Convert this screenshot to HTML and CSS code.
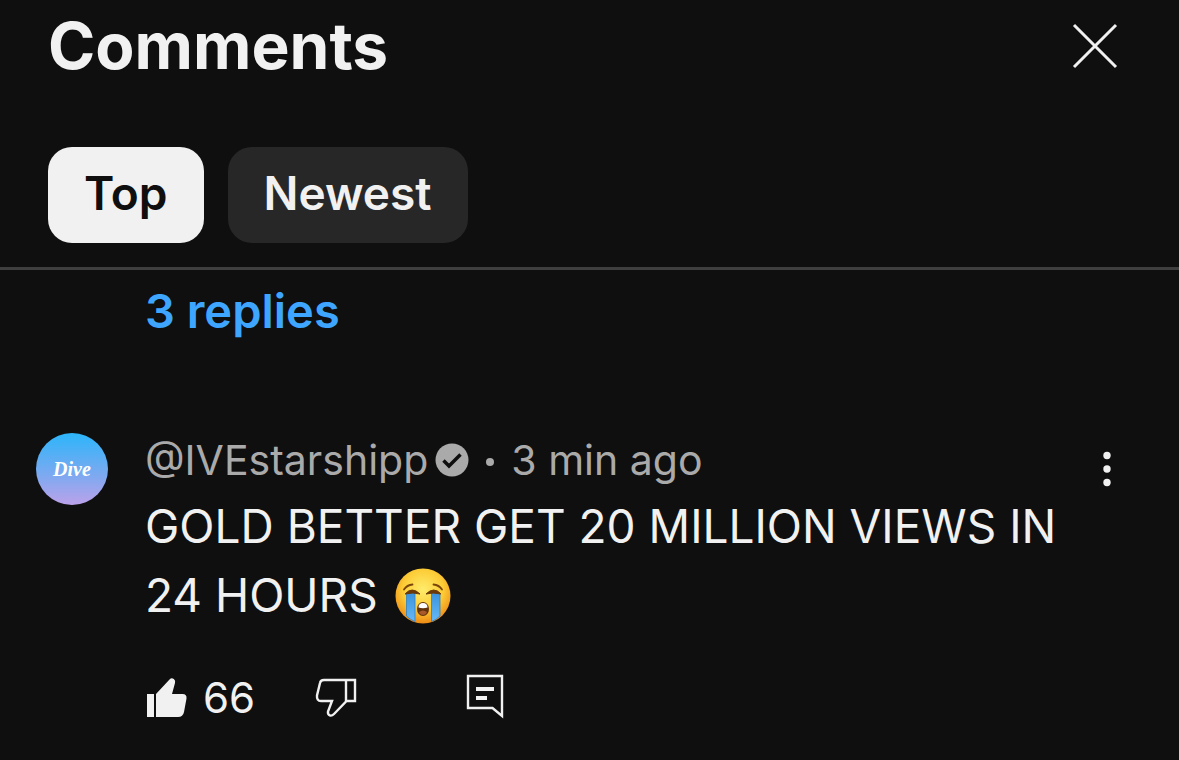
FILE: index.html
```html
<!DOCTYPE html>
<html lang="en">
  <head>
    <meta charset="utf-8" />
    <meta name="viewport" content="width=device-width, initial-scale=1" />
    <title>Comments</title>
    <link rel="stylesheet" href="styles.css">
  </head>

  <body>
    <div class="panel">
      <header class="header">
        <div class="title_row">
          <h1>Comments</h1>
          <button type="button" class="icon_btn" aria-label="Close">
            <svg width="48" height="48" viewBox="0 0 48 48">
              <path d="M3 3l42 42M45 3L3 45" fill="none" stroke="#f1f1f1" stroke-width="3" />
            </svg>
          </button>
        </div>
        <div class="chips">
          <button type="button" class="chip active">Top</button>
          <button type="button" class="chip">Newest</button>
        </div>
      </header>

      <main class="list">
        <a href="#" class="replies">3 replies</a>

        <article class="comment">
          <div class="avatar"><span>Dive</span></div>

          <div class="content">
            <div class="meta">
              <span>@IVEstarshipp</span>
              <svg class="verified" width="34" height="34" viewBox="0 0 34 34">
                <circle cx="17" cy="17" r="16.5" fill="#aaa" />
                <path d="M8.5 17.5l5.5 5.5L25.500 11.500" fill="none" stroke="#0f0f0f" stroke-width="3.5" />
              </svg>
              <span class="dot"></span>
              <span>3 min ago</span>
            </div>

            <p class="text">
              GOLD BETTER GET 20 MILLION VIEWS IN 24 HOURS
              <svg class="emoji" role="img" aria-label="Loudly crying face" width="56" height="56" viewBox="0 0 56 56">
                <defs>
                  <radialGradient id="face" cx="50%" cy="38%" r="62%">
                    <stop offset="0" stop-color="#ffec6b" />
                    <stop offset="0.6" stop-color="#fccb35" />
                    <stop offset="1" stop-color="#ee8b16" />
                  </radialGradient>
                  <linearGradient id="tear" x1="0" y1="0" x2="0" y2="1">
                    <stop offset="0" stop-color="#3b93dc" />
                    <stop offset="1" stop-color="#66b9f5" />
                  </linearGradient>
                </defs>
                <circle cx="28" cy="28" r="27.5" fill="url(#face)" />
                <path d="M11.500 25H20v28.500Q15 51.500 11.500 48zM36.500 25H45v23Q41 52 36.500 53.500z" fill="url(#tear)" stroke="#2f7fc4" stroke-width="0.8" />
                <path d="M10 26q7-8 15 0q-7-2-15 0zM46 26q-7-8-15 0q7-2 15 0z" fill="#6b3a08" stroke="#6b3a08" stroke-width="1" />
                <path d="M9 21.500q3-4.500 8.500-5M47 21.500q-3-4.500-8.500-5" fill="none" stroke="#7a4508" stroke-width="1.8" stroke-linecap="round" />
                <ellipse cx="28" cy="41" rx="6" ry="7" fill="#62320c" />
                <path d="M23.500 39.500q0-4.500 4.500-4.500t4.500 4.500q-4.500 1.500-9 0z" fill="#fff" />
                <path d="M24 44q4-3 8 0q-1 3-4 3t-4-3z" fill="#a85a2a" />
              </svg>
            </p>

            <div class="actions">
              <button type="button" class="like" aria-label="Like, 66">
                <svg width="42" height="48" viewBox="0 0 42 48">
                  <path d="M2 20h7v23H2zM11 20L24.500 5.500Q26.500 3.500 28.800 5Q30.800 6.500 30 9L27 20h10.500q4.500 0 4 4.500l-2.500 13.500q-1 5-6 5H11z" fill="#f1f1f1" />
                </svg>
                <span>66</span>
              </button>
              <button type="button" class="dislike" aria-label="Dislike">
                <svg width="42" height="48" viewBox="0 0 42 48">
                  <path d="M31 6H9Q5.500 6 5 9L2 21.500Q1.500 27 6 27H17L13 37.500Q12.500 40.500 15 41.500Q17 42 19 40L31 27.500zM31 6h9v21h-9" fill="none" stroke="#f1f1f1" stroke-width="2.4" />
                </svg>
              </button>
              <button type="button" class="reply" aria-label="Reply">
                <svg width="40" height="48" viewBox="0 0 40 48">
                  <path d="M3 2h34v40L27.500 34H3z" fill="none" stroke="#f1f1f1" stroke-width="2.4" />
                  <path d="M11 13h18v4H11zM11 22h11v4H11z" fill="#f1f1f1" />
                </svg>
              </button>
            </div>
          </div>

          <button type="button" class="icon_btn more" aria-label="More options">
            <svg width="24" height="48" viewBox="0 0 24 48">
              <g fill="#f1f1f1">
                <circle cx="12" cy="10.5" r="3.7" />
                <circle cx="12" cy="24" r="3.7" />
                <circle cx="12" cy="37.5" r="3.7" />
              </g>
            </svg>
          </button>
        </article>
      </main>
    </div>
  </body>
</html>
```
FILE: styles.css
```css
* {
  box-sizing: border-box;
}
body {
  margin: 0;
  background: #0f0f0f;
  color: #f1f1f1;
  font-family: Inter, "Liberation Sans", sans-serif;
}
button {
  margin: 0;
  padding: 0;
  border: 0;
  background: none;
  color: inherit;
  font: inherit;
  cursor: pointer;
}
svg {
  display: block;
  flex: none;
}

/* header */
.header {
  padding: 8px 48px 24px;
  border-bottom: 3px solid #3f3f3f;
}
.title_row {
  display: flex;
  align-items: center;
  justify-content: space-between;
  padding-right: 12px;
}
h1 {
  margin: 0;
  font-size: 64px;
  line-height: 76px;
  font-weight: 700;
}
.chips {
  display: flex;
  gap: 24px;
  margin-top: 63px;
}
.chip {
  height: 96px;
  padding: 0 36px 4px;
  border-radius: 24px;
  background: #272727;
  font-size: 46px;
  font-weight: 600;
}
.chip.active {
  background: #f1f1f1;
  color: #0f0f0f;
}

/* comments */
.list {
  padding: 11px 60px 36px 36px;
}
.replies {
  display: inline-block;
  margin-left: 109px;
  color: #3ea6ff;
  font-size: 47px;
  line-height: 60px;
  font-weight: 600;
  text-decoration: none;
}
.comment {
  display: flex;
  align-items: flex-start;
  margin-top: 92px;
}
.avatar {
  display: flex;
  flex: none;
  align-items: center;
  justify-content: center;
  width: 72px;
  height: 72px;
  margin-right: 37px;
  border-radius: 50%;
  background: linear-gradient(#2cb5fa, #7fa9f0 60%, #bca2ea);
  color: #fff;
  font: italic bold 20px "Liberation Serif", serif;
}
.content {
  flex: 1;
  min-width: 0;
}
.meta {
  display: flex;
  align-items: center;
  color: #aaa;
  font-size: 41px;
  line-height: 54px;
}
.verified {
  margin-left: 7px;
}
.dot {
  width: 8px;
  height: 8px;
  margin: 4px 17px 0;
  border-radius: 50%;
  background: #aaa;
}
.text {
  margin: 5px 0 0;
  font-size: 46px;
  line-height: 69px;
}
.emoji {
  display: inline-block;
  margin-left: 4px;
  vertical-align: -12px;
}
.actions {
  display: flex;
  align-items: center;
  margin-top: 44px;
}
.like {
  display: flex;
  align-items: center;
  gap: 16px;
  font-size: 42px;
  line-height: 48px;
}
.dislike {
  margin-left: 60px;
}
.reply {
  margin-left: 108px;
}
.more {
  margin-top: 12px;
}
```
